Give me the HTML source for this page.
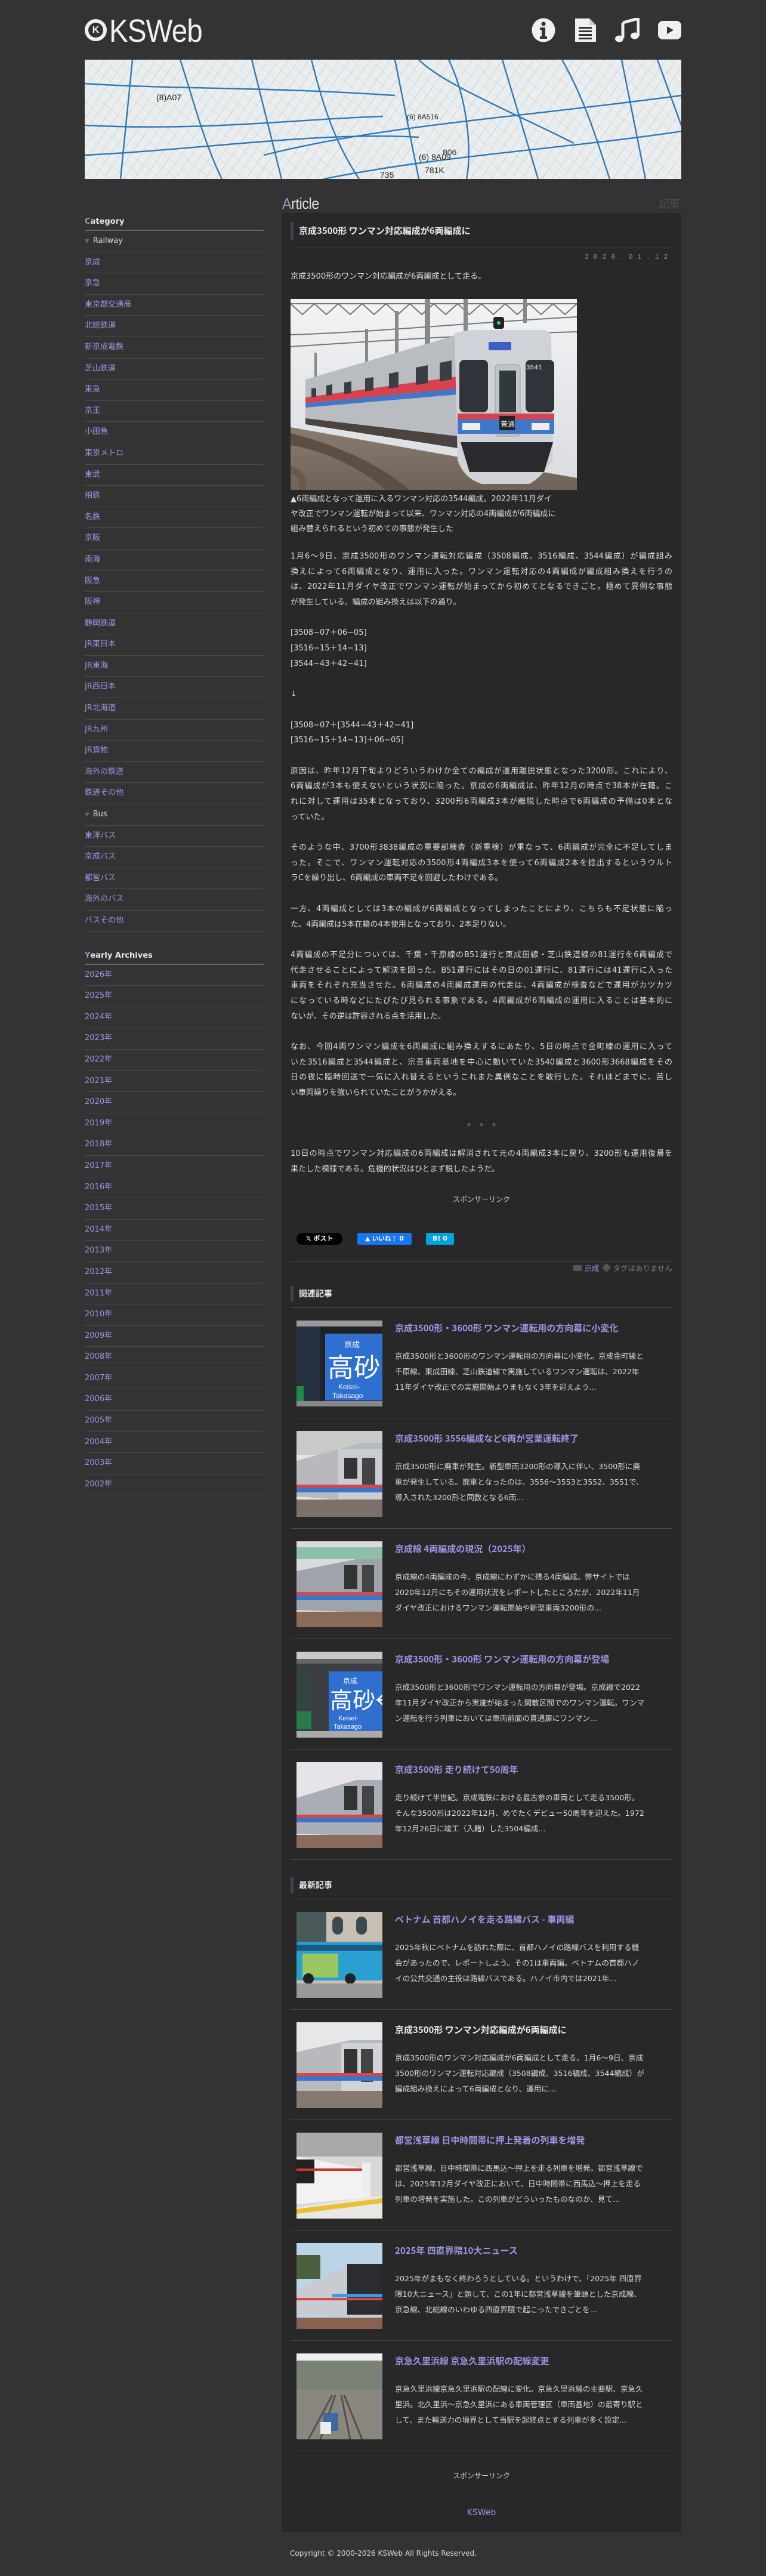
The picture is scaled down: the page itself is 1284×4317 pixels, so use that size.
<!DOCTYPE html>
<html><head><meta charset="utf-8">
<style>
*{margin:0;padding:0;box-sizing:border-box}
html,body{width:1284px;height:4317px;background:#333333;overflow:hidden}
body{position:relative;font-family:"DejaVu Sans","Noto Sans CJK JP",sans-serif;color:#dcdcdc;font-size:13px}
.a{position:absolute}
a{color:#9a95e2;text-decoration:none}
.side{position:absolute;left:142px;top:357px;width:300px}
.sh{height:30px;line-height:30px;font-weight:bold;font-size:13px;color:#e6e6e6;border-bottom:2px solid #666}
.sh b{color:#a98fc4}
.row{height:35.6px;line-height:34.6px;border-bottom:1px solid #4a4a4a;font-size:13px;white-space:nowrap}
.row.p{color:#d8d8d8}
.row.p i{font-style:normal;color:#666;font-size:10px;margin-right:6px}
.box{position:absolute;left:472px;top:357px;width:670px;height:3886px;background:#282828}
.ln{position:absolute;left:487px;width:640px;height:1px;background:#474747}
.txt{position:absolute;left:487px;width:640px;line-height:25.7px;font-size:13px;white-space:nowrap;color:#dcdcdc}
.txt div{height:25.7px}
.j{text-align:justify;text-align-last:justify;width:640px}
.hd{position:absolute;left:487px;height:26px;border-left:5px solid #4a3f52;padding-left:9px;line-height:26px;font-family:"Noto Sans CJK JP",sans-serif;font-weight:bold;font-size:14px;color:#e8e8e8}
.it{position:absolute;left:472px;width:670px;height:185px}
.it .th{position:absolute;left:25px;top:21px;width:144px;height:144px;overflow:hidden}
.it .tt{position:absolute;left:190px;top:22px;font-family:"Noto Sans CJK JP",sans-serif;font-weight:bold;font-size:15px;line-height:24px;color:#9a95e2;white-space:nowrap}
.it .ex{position:absolute;left:190px;top:68px;width:465px;font-size:12.6px;line-height:26px;white-space:nowrap;color:#d8d8d8}
.it .bt{position:absolute;left:15px;right:15px;bottom:0;height:1px;background:#474747}
</style></head><body>

<!-- header -->
<div class="a" style="left:142px;top:32px;width:37px;height:37px;border-radius:50%;background:#f0f0f0"></div>
<div class="a" style="left:148px;top:38px;width:25px;height:25px;border-radius:50%;background:#333;color:#f0f0f0;font:bold 16px 'Liberation Sans',sans-serif;text-align:center;line-height:25px">K</div>
<div class="a" style="left:183px;top:22px;font:54px 'Liberation Sans',sans-serif;color:#f0f0f0;transform:scaleX(0.88);transform-origin:left top;letter-spacing:-1px;line-height:60px">KSWeb</div>

<svg class="a" style="left:891px;top:30px" width="41" height="41" viewBox="0 0 41 41"><ellipse cx="20" cy="20.5" rx="19.5" ry="20" fill="#f0f0f0"/><circle cx="20" cy="10" r="3.6" fill="#333"/><path d="M14 16h9v15h3v4H14v-4h3V20h-3z" fill="#333"/></svg>
<svg class="a" style="left:963px;top:30px" width="37" height="41" viewBox="0 0 37 41"><path d="M1 1h24l11 11v28H1z" fill="#f0f0f0"/><path d="M25 1v11h11" fill="#ccc"/><g fill="#333"><rect x="7" y="15" width="22" height="3"/><rect x="7" y="21" width="22" height="3"/><rect x="7" y="27" width="22" height="3"/><rect x="7" y="33" width="22" height="3"/></g></svg>
<svg class="a" style="left:1030px;top:30px" width="42" height="41" viewBox="0 0 42 41"><path d="M14 8L40 1v29" stroke="#f0f0f0" stroke-width="5" fill="none"/><path d="M14 8v26" stroke="#f0f0f0" stroke-width="5"/><ellipse cx="8" cy="35" rx="7" ry="5.5" fill="#f0f0f0"/><ellipse cx="34" cy="30" rx="7" ry="5.5" fill="#f0f0f0"/></svg>
<svg class="a" style="left:1103px;top:35px" width="39" height="31" viewBox="0 0 39 31"><rect x="0" y="0" width="39" height="31" rx="8" fill="#f0f0f0"/><path d="M15 9l11 6.5-11 6.5z" fill="#333"/></svg>

<!-- banner -->
<svg class="a" style="left:142px;top:100px" width="1000" height="200" viewBox="0 0 1000 200">
<defs>
<pattern id="h1" width="14" height="14" patternUnits="userSpaceOnUse" patternTransform="rotate(35)"><path d="M0 0v14" stroke="#7fb0d8" stroke-width="1"/></pattern>
<pattern id="h2" width="18" height="18" patternUnits="userSpaceOnUse" patternTransform="rotate(-50)"><path d="M0 0v18" stroke="#8dbbe0" stroke-width="0.9"/></pattern>
</defs>
<rect width="1000" height="200" fill="#eceeee"/>
<rect width="1000" height="200" fill="url(#h1)" opacity=".75"/>
<rect width="1000" height="200" fill="url(#h2)" opacity=".6"/>
<g stroke="#2e78b5" stroke-width="2.4" fill="none">
<path d="M0 40C150 50 300 45 520 60"/><path d="M0 160C200 150 400 120 560 130"/><path d="M80 0L60 200"/><path d="M160 0C180 60 200 140 230 200"/><path d="M280 0L330 200"/><path d="M380 0C400 80 420 140 460 200"/><path d="M520 0L560 200"/><path d="M610 0C640 60 650 150 640 200"/><path d="M700 0L760 200"/><path d="M800 0C840 70 860 140 880 200"/><path d="M900 0L940 200"/><path d="M960 0L1000 110"/>
<path d="M300 160C500 110 700 100 1000 60"/><path d="M400 200C600 160 800 150 1000 120"/><path d="M0 110C200 120 350 100 500 95"/><path d="M560 0C600 40 700 80 820 140"/>
</g>
<g fill="#222" font-family="Liberation Sans,sans-serif" font-size="14">
<text x="120" y="68">(8)A07</text><text x="560" y="168">(6) 8A09</text><text x="570" y="190">781K</text><text x="600" y="160">806</text><text x="495" y="198">735</text><text x="540" y="100" font-size="12">(6) 8A516</text>
</g>
</svg>

<!-- Article heading -->
<div class="a" style="left:473px;top:325px;font:26px/32px 'Liberation Sans',sans-serif;color:#dcdcdc;transform:scaleX(.9);transform-origin:left top;letter-spacing:-0.5px"><span style="color:#a78fc2">A</span>rticle</div>
<div class="a" style="left:1104px;top:329px;font:18px/24px 'Noto Sans CJK JP',sans-serif;color:#4e4e4e">記事</div>

<!-- sidebar -->
<div class="side">
<div class="sh"><b>C</b>ategory</div>
<div class="row p"><i>▼</i>Railway</div>
<div class="row"><a>京成</a></div><div class="row"><a>京急</a></div><div class="row"><a>東京都交通局</a></div><div class="row"><a>北総鉄道</a></div><div class="row"><a>新京成電鉄</a></div><div class="row"><a>芝山鉄道</a></div><div class="row"><a>東急</a></div><div class="row"><a>京王</a></div><div class="row"><a>小田急</a></div><div class="row"><a>東京メトロ</a></div><div class="row"><a>東武</a></div><div class="row"><a>相鉄</a></div><div class="row"><a>名鉄</a></div><div class="row"><a>京阪</a></div><div class="row"><a>南海</a></div><div class="row"><a>阪急</a></div><div class="row"><a>阪神</a></div><div class="row"><a>静岡鉄道</a></div><div class="row"><a>JR東日本</a></div><div class="row"><a>JR東海</a></div><div class="row"><a>JR西日本</a></div><div class="row"><a>JR北海道</a></div><div class="row"><a>JR九州</a></div><div class="row"><a>JR貨物</a></div><div class="row"><a>海外の鉄道</a></div><div class="row"><a>鉄道その他</a></div>
<div class="row p"><i>▼</i>Bus</div>
<div class="row"><a>東洋バス</a></div><div class="row"><a>京成バス</a></div><div class="row"><a>都営バス</a></div><div class="row"><a>海外のバス</a></div><div class="row"><a>バスその他</a></div>
<div class="sh" style="margin-top:25px"><b>Y</b>early Archives</div>
<div class="row"><a>2026年</a></div><div class="row"><a>2025年</a></div><div class="row"><a>2024年</a></div><div class="row"><a>2023年</a></div><div class="row"><a>2022年</a></div><div class="row"><a>2021年</a></div><div class="row"><a>2020年</a></div><div class="row"><a>2019年</a></div><div class="row"><a>2018年</a></div><div class="row"><a>2017年</a></div><div class="row"><a>2016年</a></div><div class="row"><a>2015年</a></div><div class="row"><a>2014年</a></div><div class="row"><a>2013年</a></div><div class="row"><a>2012年</a></div><div class="row"><a>2011年</a></div><div class="row"><a>2010年</a></div><div class="row"><a>2009年</a></div><div class="row"><a>2008年</a></div><div class="row"><a>2007年</a></div><div class="row"><a>2006年</a></div><div class="row"><a>2005年</a></div><div class="row"><a>2004年</a></div><div class="row"><a>2003年</a></div><div class="row"><a>2002年</a></div>
</div>

<!-- article box -->
<div class="box"></div>
<div class="hd" style="top:372px;height:30px;line-height:30px;font-size:15px">京成3500形 ワンマン対応編成が6両編成に</div>
<div class="ln" style="top:415px"></div>
<div class="a" style="left:887px;top:423px;width:240px;text-align:right;font:12px/16px 'Liberation Mono',monospace;letter-spacing:7.5px;color:#8a8a8a;margin-right:-7px">2026.01.12</div>
<div class="txt" style="top:451px"><div>京成3500形のワンマン対応編成が6両編成として走る。</div></div>

<svg class="a" style="left:487px;top:501px" width="480" height="320" viewBox="0 0 480 320">
<defs><linearGradient id="sk" x1="0" y1="0" x2="0" y2="1"><stop offset="0" stop-color="#f2f3f5"/><stop offset="1" stop-color="#d9dbde"/></linearGradient>
<linearGradient id="gr" x1="0" y1="0" x2="0" y2="1"><stop offset="0" stop-color="#8a7b6e"/><stop offset="1" stop-color="#6e635a"/></linearGradient></defs>
<rect width="480" height="320" fill="url(#sk)"/>
<g stroke="#777" stroke-width="2" fill="none"><path d="M0 8H480"/><path d="M0 8l20 18 20-18 20 18 20-18 20 18 20-18 20 18 20-18 20 18 20-18 20 18 20-18 20 18 20-18 20 18 20-18 20 18 20-18 20 18 20-18 20 18 20-18 20 18 20-18"/><path d="M0 60C150 55 300 40 480 30"/><path d="M0 80C150 70 300 60 480 55"/></g>
<g fill="#888"><rect x="225" y="0" width="9" height="80"/><rect x="290" y="0" width="7" height="60"/><rect x="175" y="20" width="6" height="110"/><rect x="125" y="50" width="5" height="100"/><rect x="40" y="90" width="4" height="80"/><rect x="390" y="0" width="6" height="40"/></g>
<path d="M0 215L480 300V320H0z" fill="url(#gr)"/>
<path d="M0 225C60 240 140 270 200 320H160C120 285 60 255 0 245z" fill="#5a4e45"/>
<path d="M0 280C20 285 30 300 25 320H15C15 305 10 295 0 292z" fill="#6b5a4c"/>
<path d="M25 135L280 60H400V260L25 200z" fill="#b9bcc1"/>
<path d="M25 165L280 130V150L25 175z" fill="#d8424e"/>
<path d="M25 175L280 150V160L25 182z" fill="#3f78c9"/>
<g fill="#3b3d44"><path d="M35 150l8-1v15l-8 1z"/><path d="M60 145l10-2v18l-10 1z"/><path d="M90 140l12-2v20l-12 1z"/><path d="M125 133l14-2v22l-14 2z"/><path d="M165 125l16-3v26l-16 2z"/><path d="M210 115l20-4v30l-20 3z"/><path d="M250 107l20-4v32l-20 3z"/></g>
<path d="M25 200L280 230V250L25 210z" fill="#4a4340"/>
<path d="M275 58Q290 52 320 52H420Q435 52 437 62L440 270Q420 300 400 310H320Q290 300 280 270z" fill="#cfd2d6"/>
<rect x="283" y="102" width="48" height="88" rx="8" fill="#2f343a"/>
<rect x="394" y="102" width="48" height="88" rx="8" fill="#2f343a"/>
<rect x="343" y="110" width="42" height="120" rx="6" fill="#c0c3c7" stroke="#999"/>
<rect x="350" y="120" width="28" height="70" fill="#2f3a3a"/>
<rect x="280" y="192" width="162" height="10" fill="#d8424e"/>
<rect x="280" y="202" width="162" height="24" fill="#3f78c9"/>
<rect x="350" y="196" width="26" height="24" fill="#222"/>
<text x="352" y="214" font-size="12" fill="#fff" font-family="Noto Sans CJK JP,sans-serif">普通</text>
<rect x="288" y="208" width="30" height="12" fill="#eee"/><rect x="404" y="208" width="30" height="12" fill="#eee"/>
<rect x="332" y="72" width="38" height="14" rx="2" fill="#3b5fc4"/>
<path d="M285 240H440L425 290H300z" fill="#2a2a2e"/>
<rect x="340" y="30" width="18" height="20" rx="4" fill="#222"/><circle cx="349" cy="40" r="3" fill="#2fd38a"/>
<text x="395" y="118" font-size="11" fill="#eee" font-family="Liberation Mono,monospace">3541</text>
</svg>

<div class="txt" style="top:824px;line-height:25px"><div style="height:25px">▲6両編成となって運用に入るワンマン対応の3544編成。2022年11月ダイ</div><div style="height:25px">ヤ改正でワンマン運転が始まって以来、ワンマン対応の4両編成が6両編成に</div><div style="height:25px">組み替えられるという初めての事態が発生した</div></div>
<div class="txt" style="top:920px">
<div class="j">1月6〜9日、京成3500形のワンマン運転対応編成（3508編成、3516編成、3544編成）が編成組み</div>
<div class="j">換えによって6両編成となり、運用に入った。ワンマン運転対応の4両編成が編成組み換えを行うの</div>
<div class="j">は、2022年11月ダイヤ改正でワンマン運転が始まってから初めてとなるできごと。極めて異例な事態</div>
<div>が発生している。編成の組み換えは以下の通り。</div>
<div></div>
<div>[3508−07＋06−05]</div><div>[3516−15＋14−13]</div><div>[3544−43＋42−41]</div>
<div></div><div>↓</div><div></div>
<div>[3508−07＋[3544−43＋42−41]</div><div>[3516−15＋14−13]＋06−05]</div>
<div></div>
<div class="j">原因は、昨年12月下旬よりどういうわけか全ての編成が運用離脱状態となった3200形。これにより、</div>
<div class="j">6両編成が3本も使えないという状況に陥った。京成の6両編成は、昨年12月の時点で38本が在籍。こ</div>
<div class="j">れに対して運用は35本となっており、3200形6両編成3本が離脱した時点で6両編成の予備は0本とな</div>
<div>っていた。</div>
<div></div>
<div class="j">そのような中、3700形3838編成の重要部検査（新重検）が重なって、6両編成が完全に不足してしま</div>
<div class="j">った。そこで、ワンマン運転対応の3500形4両編成3本を使って6両編成2本を捻出するというウルト</div>
<div>ラCを繰り出し、6両編成の車両不足を回避したわけである。</div>
<div></div>
<div class="j">一方、4両編成としては3本の編成が6両編成となってしまったことにより、こちらも不足状態に陥っ</div>
<div>た。4両編成は5本在籍の4本使用となっており、2本足りない。</div>
<div></div>
<div class="j">4両編成の不足分については、千葉・千原線のB51運行と東成田線・芝山鉄道線の81運行を6両編成で</div>
<div class="j">代走させることによって解決を図った。B51運行にはその日の01運行に、81運行には41運行に入った</div>
<div class="j">車両をそれぞれ充当させた。6両編成の4両編成運用の代走は、4両編成が検査などで運用がカツカツ</div>
<div class="j">になっている時などにたびたび見られる事象である。4両編成が6両編成の運用に入ることは基本的に</div>
<div>ないが、その逆は許容される点を活用した。</div>
<div></div>
<div class="j">なお、今回4両ワンマン編成を6両編成に組み換えするにあたり、5日の時点で金町線の運用に入って</div>
<div class="j">いた3516編成と3544編成と、宗吾車両基地を中心に動いていた3540編成と3600形3668編成をその</div>
<div class="j">日の夜に臨時回送で一気に入れ替えるというこれまた異例なことを敢行した。それほどまでに、苦し</div>
<div>い車両繰りを強いられていたことがうかがえる。</div>
</div>
<div class="a" style="left:487px;top:1876px;width:640px;text-align:center;font-size:9px;line-height:18px;color:#555;letter-spacing:14px;padding-left:14px">◆◆◆</div>
<div class="txt" style="top:1921px">
<div class="j">10日の時点でワンマン対応編成の6両編成は解消されて元の4両編成3本に戻り、3200形も運用復帰を</div>
<div>果たした模様である。危機的状況はひとまず脱したようだ。</div>
</div>
<div class="a" style="left:487px;top:2002px;width:640px;text-align:center;font:12px/16px 'Noto Sans CJK JP',sans-serif;color:#d0d0d0">スポンサーリンク</div>

<!-- share -->
<div class="a" style="left:497px;top:2066px;width:77px;height:20px;border-radius:10px;background:#000;color:#fff;font:bold 11px/20px 'DejaVu Sans','Noto Sans CJK JP',sans-serif;text-align:center">𝕏 ポスト</div>
<div class="a" style="left:599px;top:2066px;width:91px;height:20px;border-radius:3px;background:#1877f2;color:#fff;font:bold 10.5px/20px 'DejaVu Sans','Noto Sans CJK JP',sans-serif;text-align:center">▲ いいね！ 0</div>
<div class="a" style="left:714px;top:2066px;width:47px;height:20px;border-radius:2px;background:#00a4de;color:#fff;font:bold 11px/20px 'DejaVu Sans',sans-serif;text-align:center">B! 0</div>

<div class="ln" style="top:2114px"></div>
<div class="a" style="left:827px;top:2117px;width:300px;text-align:right;font-size:12.5px;line-height:18px;color:#7a7a7a;white-space:nowrap"><span style="display:inline-block;width:14px;height:10px;background:#555;margin-right:4px;border-radius:1px"></span><a>京成</a> <span style="display:inline-block;width:11px;height:11px;background:#555;transform:rotate(45deg);border-radius:2px;margin:0 5px 0 3px"></span>タグはありません</div>

<!-- related -->
<div class="hd" style="top:2155px">関連記事</div>
<div class="ln" style="top:2191px"></div>

<div class="it" style="top:2192px">
<svg class="th" viewBox="0 0 144 144"><rect width="144" height="144" fill="#222"/><rect y="0" width="144" height="10" fill="#999"/><rect x="0" y="10" width="40" height="125" fill="#253040"/><rect x="0" y="110" width="12" height="25" fill="#1f8a4a"/><rect x="48" y="22" width="96" height="112" fill="#2e6fd0"/><text x="80" y="45" font-size="13" fill="#fff" font-family="Noto Sans CJK JP,sans-serif">京成</text><text x="52" y="94" font-size="44" fill="#fff" font-family="Noto Sans CJK JP,sans-serif">高砂</text><text x="70" y="115" font-size="12" fill="#fff" font-family="Liberation Sans,sans-serif">Keisei-</text><text x="60" y="130" font-size="12" fill="#fff" font-family="Liberation Sans,sans-serif">Takasago</text><rect y="135" width="144" height="9" fill="#888"/></svg>
<div class="tt">京成3500形・3600形 ワンマン運転用の方向幕に小変化</div>
<div class="ex">京成3500形と3600形のワンマン運転用の方向幕に小変化。京成金町線と<br>千原線、東成田線、芝山鉄道線で実施しているワンマン運転は、2022年<br>11年ダイヤ改正での実施開始よりまもなく3年を迎えよう...</div>
<div class="bt"></div></div>

<div class="it" style="top:2377px">
<svg class="th" viewBox="0 0 144 144"><rect width="144" height="144" fill="#e3e4e6"/><rect x="0" y="0" width="144" height="40" fill="#c8cac8"/><path d="M0 50L110 20H144V120L0 110z" fill="#b7b9bd"/><rect x="70" y="30" width="74" height="90" fill="#c9ccd0"/><rect x="80" y="45" width="22" height="35" fill="#333"/><rect x="110" y="45" width="22" height="50" fill="#444"/><rect x="0" y="90" width="144" height="5" fill="#d44"/><rect x="0" y="95" width="144" height="8" fill="#3c74c8"/><path d="M0 115H144V144H0z" fill="#7d7068"/></svg>
<div class="tt">京成3500形 3556編成など6両が営業運転終了</div>
<div class="ex">京成3500形に廃車が発生。新型車両3200形の導入に伴い、3500形に廃<br>車が発生している。廃車となったのは、3556〜3553と3552、3551で、<br>導入された3200形と同数となる6両...</div>
<div class="bt"></div></div>

<div class="it" style="top:2562px">
<svg class="th" viewBox="0 0 144 144"><rect width="144" height="144" fill="#d8dadc"/><rect x="0" y="10" width="144" height="20" fill="#8cbfa8"/><path d="M0 50L100 30H144V120L0 115z" fill="#9fa3aa"/><rect x="80" y="40" width="22" height="40" fill="#333"/><rect x="110" y="40" width="20" height="50" fill="#444"/><rect x="0" y="85" width="144" height="5" fill="#d44"/><rect x="0" y="90" width="144" height="8" fill="#3c74c8"/><path d="M0 118H144V144H0z" fill="#8a6a58"/></svg>
<div class="tt">京成線 4両編成の現況（2025年）</div>
<div class="ex">京成線の4両編成の今。京成線にわずかに残る4両編成。弊サイトでは<br>2020年12月にもその運用状況をレポートしたところだが、2022年11月<br>ダイヤ改正におけるワンマン運転開始や新型車両3200形の...</div>
<div class="bt"></div></div>

<div class="it" style="top:2747px">
<svg class="th" viewBox="0 0 144 144"><rect width="144" height="144" fill="#3a3d42"/><rect y="0" width="144" height="12" fill="#c8c8c8"/><rect y="12" width="144" height="8" fill="#666"/><rect x="0" y="35" width="25" height="100" fill="#344"/><rect x="0" y="100" width="25" height="30" fill="#2a7a4a"/><rect x="54" y="33" width="90" height="100" fill="#2e6fd0"/><text x="78" y="53" font-size="12" fill="#fff" font-family="Noto Sans CJK JP,sans-serif">京成</text><text x="56" y="95" font-size="38" fill="#fff" font-family="Noto Sans CJK JP,sans-serif">高砂↔</text><text x="70" y="115" font-size="11" fill="#fff" font-family="Liberation Sans,sans-serif">Keisei-</text><text x="62" y="129" font-size="11" fill="#fff" font-family="Liberation Sans,sans-serif">Takasago</text><rect y="133" width="144" height="11" fill="#aaa"/></svg>
<div class="tt">京成3500形・3600形 ワンマン運転用の方向幕が登場</div>
<div class="ex">京成3500形と3600形でワンマン運転用の方向幕が登場。京成線で2022<br>年11月ダイヤ改正から実施が始まった閑散区間でのワンマン運転。ワンマ<br>ン運転を行う列車においては車両前面の貫通扉にワンマン...</div>
<div class="bt"></div></div>

<div class="it" style="top:2932px">
<svg class="th" viewBox="0 0 144 144"><rect width="144" height="144" fill="#e6e4e8"/><path d="M0 60L100 30H144V125L0 120z" fill="#a9adb5"/><rect x="80" y="40" width="22" height="40" fill="#333"/><rect x="110" y="40" width="20" height="50" fill="#444"/><rect x="0" y="88" width="144" height="5" fill="#d44"/><rect x="0" y="93" width="144" height="8" fill="#3c74c8"/><path d="M0 122H144V144H0z" fill="#8a6a58"/></svg>
<div class="tt">京成3500形 走り続けて50周年</div>
<div class="ex">走り続けて半世紀。京成電鉄における最古参の車両として走る3500形。<br>そんな3500形は2022年12月、めでたくデビュー50周年を迎えた。1972<br>年12月26日に竣工（入籍）した3504編成...</div>
<div class="bt"></div></div>

<!-- recent -->
<div class="hd" style="top:3146px">最新記事</div>
<div class="ln" style="top:3182px"></div>

<div class="it" style="top:3183px">
<svg class="th" viewBox="0 0 144 144"><rect width="144" height="144" fill="#c9beb2"/><rect x="0" y="0" width="50" height="60" fill="#4a5a5a"/><rect x="60" y="8" width="18" height="30" rx="9" fill="#3a4a50"/><rect x="100" y="8" width="18" height="30" rx="9" fill="#3a4a50"/><rect x="0" y="50" width="144" height="65" rx="4" fill="#2aa0d0"/><rect x="10" y="70" width="60" height="40" fill="#9ac860"/><rect x="0" y="55" width="144" height="10" fill="#1a5a80"/><circle cx="20" cy="112" r="9" fill="#222"/><circle cx="90" cy="112" r="9" fill="#222"/><rect y="120" width="144" height="24" fill="#999"/></svg>
<div class="tt">ベトナム 首都ハノイを走る路線バス - 車両編</div>
<div class="ex">2025年秋にベトナムを訪れた際に、首都ハノイの路線バスを利用する機<br>会があったので、レポートしよう。その1は車両編。ベトナムの首都ハノ<br>イの公共交通の主役は路線バスである。ハノイ市内では2021年...</div>
<div class="bt"></div></div>

<div class="it" style="top:3368px">
<svg class="th" viewBox="0 0 144 144"><rect width="144" height="144" fill="#e6e7e9"/><path d="M0 50L90 30H144V120L0 115z" fill="#b7b9bd"/><rect x="75" y="35" width="69" height="85" fill="#cfd2d6"/><rect x="80" y="45" width="22" height="40" fill="#333"/><rect x="108" y="45" width="20" height="55" fill="#444"/><rect x="0" y="85" width="144" height="5" fill="#d44"/><rect x="0" y="90" width="144" height="8" fill="#3c74c8"/><path d="M0 115H144V144H0z" fill="#867a70"/></svg>
<div class="tt" style="color:#e8e8e8">京成3500形 ワンマン対応編成が6両編成に</div>
<div class="ex">京成3500形のワンマン対応編成が6両編成として走る。1月6〜9日、京成<br>3500形のワンマン運転対応編成（3508編成、3516編成、3544編成）が<br>編成組み換えによって6両編成となり、運用に...</div>
<div class="bt"></div></div>

<div class="it" style="top:3553px">
<svg class="th" viewBox="0 0 144 144"><rect width="144" height="144" fill="#d8d8d6"/><rect width="144" height="40" fill="#a8aaa8"/><path d="M0 40L110 60V110L0 120z" fill="#f2f2f2"/><rect x="0" y="45" width="30" height="40" fill="#222"/><rect x="0" y="60" width="110" height="4" fill="#c33"/><rect x="110" y="50" width="14" height="75" fill="#eee"/><path d="M0 125L144 105V144H0z" fill="#e8e8e4"/><path d="M0 128L144 110V118L0 136z" fill="#e8c030"/></svg>
<div class="tt">都営浅草線 日中時間帯に押上発着の列車を増発</div>
<div class="ex">都営浅草線、日中時間帯に西馬込〜押上を走る列車を増発。都営浅草線で<br>は、2025年12月ダイヤ改正において、日中時間帯に西馬込〜押上を走る<br>列車の増発を実施した。この列車がどういったものなのか、見て...</div>
<div class="bt"></div></div>

<div class="it" style="top:3738px">
<svg class="th" viewBox="0 0 144 144"><rect width="144" height="144" fill="#bcd4e8"/><rect x="0" y="20" width="40" height="40" fill="#4a6040"/><path d="M0 80L80 40H144V125L0 120z" fill="#c8ccd2"/><rect x="85" y="35" width="59" height="85" fill="#2a2c30"/><rect x="0" y="92" width="144" height="4" fill="#d44"/><rect x="60" y="85" width="84" height="6" fill="#3c9ae0"/><path d="M0 125H144V144H0z" fill="#8a6050"/></svg>
<div class="tt">2025年 四直界隈10大ニュース</div>
<div class="ex">2025年がまもなく終わろうとしている。というわけで、「2025年 四直界<br>隈10大ニュース」と題して、この1年に都営浅草線を筆頭とした京成線、<br>京急線、北総線のいわゆる四直界隈で起こったできごとを...</div>
<div class="bt"></div></div>

<div class="it" style="top:3923px">
<svg class="th" viewBox="0 0 144 144"><rect width="144" height="144" fill="#a8acae"/><rect width="144" height="12" fill="#eee"/><path d="M0 12H144V70H0z" fill="#7a8278"/><path d="M0 60H144V144H0z" fill="#8a8680"/><path d="M20 144L60 70M40 144L65 70M90 144L75 70M110 144L80 70" stroke="#5a5048" stroke-width="3"/><rect x="45" y="100" width="25" height="30" fill="#3a6aa0"/><rect x="40" y="115" width="18" height="20" fill="#eee"/></svg>
<div class="tt">京急久里浜線 京急久里浜駅の配線変更</div>
<div class="ex">京急久里浜線京急久里浜駅の配線に変化。京急久里浜線の主要駅、京急久<br>里浜。北久里浜〜京急久里浜にある車両管理区（車両基地）の最寄り駅と<br>して、また輸送力の境界として当駅を起終点とする列車が多く設定...</div>
<div class="bt"></div></div>

<div class="a" style="left:487px;top:4141px;width:640px;text-align:center;font:12px/16px 'Noto Sans CJK JP',sans-serif;color:#d0d0d0">スポンサーリンク</div>
<div class="a" style="left:487px;top:4202px;width:640px;text-align:center;font:14px/18px 'DejaVu Sans',sans-serif"><a>KSWeb</a></div>

<div class="a" style="left:486px;top:4271px;font:12px/16px 'DejaVu Sans',sans-serif;color:#d8d8d8;white-space:nowrap">Copyright © 2000-2026 KSWeb All Rights Reserved.</div>
</body></html>
